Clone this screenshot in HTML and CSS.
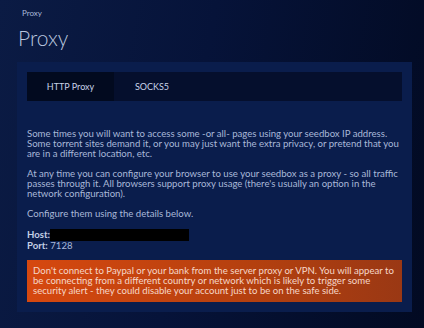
FILE: index.html
```html
<!DOCTYPE html>
<html lang="en">
<head>
    <meta charset="UTF-8">
    <meta name="viewport" content="width=device-width, initial-scale=1.0">
    <title>Proxy</title>
    <link rel="stylesheet" href="styles.css">
</head>
<body>
    <div class="crumbs">Proxy</div>
    <h1>Proxy</h1>

    <div class="card">
        <div class="tabs">
            <div class="tab active">HTTP Proxy</div>
            <div class="tab">SOCKS5</div>
        </div>

        <div class="content">
            <p>Some times you will want to access some -or all- pages using your seedbox IP address. Some torrent sites demand it, or you may just want the extra privacy, or pretend that you are in a different location, etc.</p>
            <p>At any time you can configure your browser to use your seedbox as a proxy - so all traffic passes through it. All browsers support proxy usage (there's usually an option in the network configuration).</p>
            <p>Configure them using the details below.</p>

            <div class="details">
                <div><b>Host:</b><span class="hidden"></span></div>
                <div><b>Port:</b> 7128</div>
            </div>

            <div class="warning">
                Don't connect to Paypal or your bank from the server proxy or VPN. You will appear to be connecting from a different country or network which is likely to trigger some security alert - they could disable your account just to be on the safe side.
            </div>
        </div>
    </div>
</body>
</html>
```

FILE: styles.css
```css
html, body { height: 100%; }
body {
    margin: 0;
    padding: 8px 17px 0 17px;
    box-sizing: border-box;
    font-family: Lato, "Open Sans", sans-serif;
    color: #a9b8d8;
    background: linear-gradient(100deg, #0b1b44 0%, #061339 45%, #020a22 100%);
}
.crumbs { font-size: 8px; color: #a9b8d8; padding-left: 5px; line-height: 10px; }
h1 { margin: 8px 0 0 1px; font-size: 21px; font-weight: 300; line-height: 24px; color: #b9c6df; }

.card { margin-top: 12px; width: 395px; background: #0a1d4c; padding: 10px; box-sizing: border-box; }
.tabs { display: flex; height: 29px; background: #050f2d; }
.tab { display: flex; align-items: center; justify-content: center; width: 87px; font-size: 9px; color: #c9d3e8; }
.tab.active { background: #020a1f; }
.tab + .tab { width: 76px; }

.content { padding-top: 28px; font-size: 9.6px; line-height: 10px; }
.content p { margin: 0 0 10px 0; }
.details { margin-top: 9px; }
.details b { font-weight: 700; color: #c4cfe6; }
.hidden { display: inline-block; width: 139px; height: 12px; background: #000; vertical-align: -3px; }

.warning {
    margin-top: 9px;
    padding: 6px 2px 6px 6px;
    background: linear-gradient(90deg, #d6480f 0%, #b4400f 60%, #9a3814 100%);
    color: #f6d7c8;
}
```
